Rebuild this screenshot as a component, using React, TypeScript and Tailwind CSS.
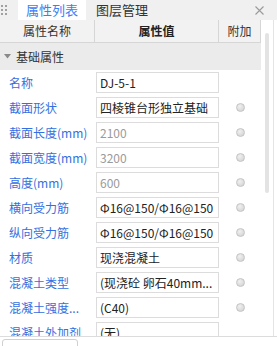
import React from 'react';

type Row = { label: string; value: string; muted?: boolean; dot?: boolean };

const rows: Row[] = [
  { label: '名称', value: 'DJ-5-1' },
  { label: '截面形状', value: '四棱锥台形独立基础', dot: true },
  { label: '截面长度(mm)', value: '2100', muted: true, dot: true },
  { label: '截面宽度(mm)', value: '3200', muted: true, dot: true },
  { label: '高度(mm)', value: '600', muted: true, dot: true },
  { label: '横向受力筋', value: 'Φ16@150/Φ16@150', dot: true },
  { label: '纵向受力筋', value: 'Φ16@150/Φ16@150', dot: true },
  { label: '材质', value: '现浇混凝土', dot: true },
  { label: '混凝土类型', value: '(现浇砼 卵石40mm...', dot: true },
  { label: '混凝土强度...', value: '(C40)', dot: true },
  { label: '混凝土外加剂', value: '(无)' },
];

const Dot = () => (
  <span className="block w-[9px] h-[9px] rounded-full border border-[#c4c4c4] bg-[radial-gradient(circle_at_40%_35%,#f0f0f0,#cfcfcf)]" />
);

const App: React.FC = () => {
  return (
    <div className="w-[277px] h-[346px] bg-white overflow-hidden font-['Microsoft_YaHei','Noto_Sans_CJK_SC',sans-serif] text-[12px] text-[#222]">
      {/* Tabs */}
      <div className="h-[20px] flex items-stretch bg-[#f0f0f0]">
        <div className="w-[18px] flex items-center pl-[1px]">
          <div className="grid grid-cols-2 gap-x-[2px] gap-y-[2px]">
            {Array.from({ length: 6 }).map((_, i) => (
              <span key={i} className="block w-[2px] h-[2px] bg-[#a0a0a0]" />
            ))}
          </div>
        </div>
        <div className="w-[68px] bg-white flex items-center justify-center text-[13px] text-[#3d7ef2]">属性列表</div>
        <div className="pl-[10px] flex items-center text-[13px] text-[#333]">图层管理</div>
        <div className="ml-auto w-[20px] mr-[8px] flex items-center justify-center">
          <svg width="9" height="9" viewBox="0 0 9 9" stroke="#9a9a9a" strokeWidth="1.1">
            <path d="M0.5 0.5 L8.5 8.5 M8.5 0.5 L0.5 8.5" />
          </svg>
        </div>
      </div>

      <div className="flex h-[317px] border-b border-[#dcdcdc]">
        <div className="w-[261px] flex flex-col">
          {/* Header */}
          <div className="h-[23px] flex bg-[#f2f2f2] border-b border-[#d6d6d6] text-[#333]">
            <div className="w-[95px] flex items-center justify-center border-r border-[#d6d6d6]">属性名称</div>
            <div className="w-[124px] flex items-center justify-center border-r border-[#d6d6d6] font-semibold text-[#222]">属性值</div>
            <div className="flex-1 flex items-center justify-center border-r border-[#d6d6d6]">附加</div>
          </div>

          <div className="flex-1 overflow-hidden">
            {/* Group */}
            <div className="h-[27px] flex items-center bg-[#ebebeb] pl-[4px] gap-[5px] text-[#333]">
              <svg width="7" height="5" viewBox="0 0 7 5">
                <path d="M0 0 L7 0 L3.5 4.5 Z" fill="#8a8a8a" />
              </svg>
              <span>基础属性</span>
            </div>

            {rows.map((r) => (
              <div key={r.label} className="h-[25px] flex items-center">
                <div className="w-[96px] pl-[9px] text-[#3470e0] whitespace-nowrap">{r.label}</div>
                <div className="w-[123px] h-[21px] border border-[#dcdcdc] bg-white flex items-center pl-[3px] overflow-hidden whitespace-nowrap">
                  <span className={r.muted ? 'text-[#9a9a9a]' : 'text-[#222]'}>{r.value}</span>
                </div>
                <div className="flex-1 flex items-center justify-center pl-[1px]">{r.dot && <Dot />}</div>
              </div>
            ))}
          </div>
        </div>

        {/* Scrollbar */}
        <div className="flex-1 flex border-r border-[#e4e4e4] mr-[3px] pl-[4px] pt-[13px]">
          <div className="w-[4px] h-[160px] rounded-full bg-[#e3e3e3]" />
        </div>
      </div>

      {/* Bottom */}
      <div className="pt-[2px] pl-[2px]">
        <div className="w-[76px] h-[12px] rounded-[3px] border border-[#d0d0d0]" />
      </div>
    </div>
  );
};

export default App;
